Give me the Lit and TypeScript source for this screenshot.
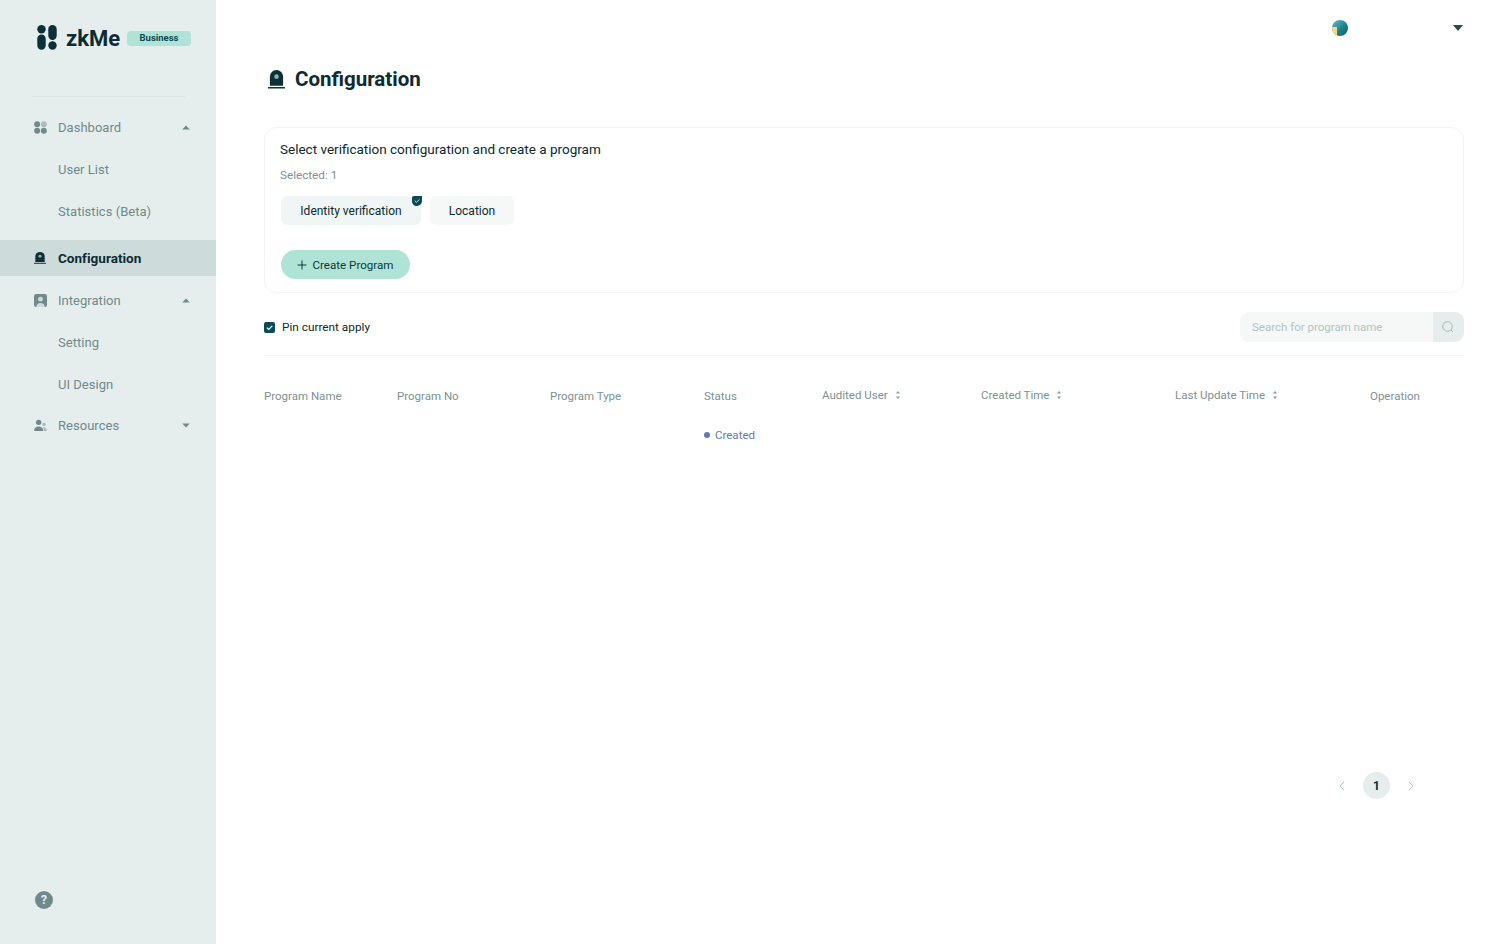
import { LitElement, html, css } from "lit";
import { customElement } from "lit/decorators.js";

const caret = (up: boolean) => html`<svg class="caret" viewBox="0 0 8 5" width="8" height="5"><path d=${up ? "M4 0.4 L7.8 4.6 H0.2 Z" : "M4 4.6 L7.8 0.4 H0.2 Z"} fill="#6f8a8c"/></svg>`;
const bell = (w: number, h: number, c: string, dot: string) => html`<svg viewBox="0 0 18 20" width=${w} height=${h} preserveAspectRatio="none"><path d="M2 16.600V7a7 7 0 0 1 14 0V16.600Z" fill=${c}/><circle cx="9" cy="7" r="2.400" fill=${dot}/><rect x="0" y="17.900" width="18" height="1.600" rx=".4" fill=${c}/></svg>`;
const sorter = html`<svg class="sorter" viewBox="0 0 6 10" width="6" height="10"><path d="M3 1 5.300 3.600H.7Z M3 9 5.300 6.400H.7Z" fill="#8fa3a5"/></svg>`;

@customElement("app-root")
export class AppRoot extends LitElement {
  static styles = css`
    :host { display: block; height: 944px; font-family: Roboto, sans-serif; color: #0d2a30; background: #fff; overflow: hidden; }
    * { box-sizing: border-box; }
    .page { display: flex; height: 944px; }
    .side { width: 216px; flex: none; background: #e6eeed; display: flex; flex-direction: column; }
    .brand { height: 97px; margin: 0 31px 0 32px; border-bottom: 1px solid #d9e4e3; display: flex; align-items: flex-start; padding: 25px 0 0 5px; }
    .brand svg { flex: none; }
    .word { flex: none; width: 55px; font: 700 22px/27px Roboto, sans-serif; margin-left: 9px; color: #0c2b33; }
    .tag { flex: none; margin: 6px 0 0 6px; width: 64px; height: 15px; border-radius: 4px; background: #aee3d5; color: #0b4a55; font: 700 9.500px/14px Roboto, sans-serif; text-align: center; }
    .nav { display: flex; flex-direction: column; padding-top: 9px; }
    .item { height: 42px; display: flex; align-items: center; padding: 0 26px 0 34px; font-size: 13px; letter-spacing: .03px; color: #6f8a8c; }
    .item svg.ic { width: 13px; height: 13px; flex: none; margin-right: 11px; }
    .item .lbl { flex: 1; }
    .sub { padding-left: 58px; }
    .active { height: 36px; margin: 8px 0 0; background: #cddbda; color: #0c2b33; font-size: 13.500px; font-weight: 700; }
    .after { margin-top: 3px; }
    .last { margin-top: -1px; }
    .bellwrap { display: flex; margin-right: 12px; }
    .help { margin: auto 0 35px 35px; width: 18px; height: 18px; border-radius: 50%; background: #6f8a8c; color: #e6eeed; font: 700 12px/18px Roboto, sans-serif; text-align: center; }
    .main { flex: 1; padding: 0 48px; display: flex; flex-direction: column; }
    .top { height: 56px; display: flex; align-items: center; }
    .avatar { margin-left: auto; width: 16px; height: 16px; border-radius: 50%; background: linear-gradient(135deg, #58c3c6, #1f7d8a 60%, #0f5d6a); position: relative; overflow: hidden; }
    .avatar::after { content: ""; position: absolute; left: 0; bottom: 0; width: 5px; height: 9px; background: #f2d98a; }
    .drop { margin-left: 105px; margin-right: 1px; }
    h1 { display: flex; align-items: center; margin: 5px 0 0; height: 36px; font-size: 20.500px; font-weight: 700; color: #0c2b33; gap: 10px; padding-left: 4px; }
    .card { margin-top: 30px; height: 166px; border: 1px solid #f1f4f4; border-radius: 12px; padding: 12px 15px; }
    .card h2 { margin: 0; font-size: 13.500px; line-height: 18px; font-weight: 400; color: #0d2a30; }
    .sel { margin-top: 9px; font-size: 11.700px; line-height: 16px; color: #7c9294; }
    .opts { display: flex; gap: 9px; margin: 13px 0 0 1px; }
    .opt { position: relative; height: 29px; border-radius: 6px; background: #f6f7f7; font-size: 12px; line-height: 30px; text-align: center; width: 84px; color: #0d2a30; }
    .opt.on { background: #f0f5f5; width: 140px; }
    .check { position: absolute; right: -1px; top: 0; }
    .create { margin: 25px 0 0 1px; width: 129px; height: 29px; border-radius: 15px; background: #aee3d5; display: flex; align-items: center; justify-content: center; gap: 5px; font-size: 11.600px; color: #0d3a40; }
    .tools { height: 63px; display: flex; align-items: center; border-bottom: 1px solid #f2f4f4; padding: 6px 0 1px; }
    .pin { display: flex; align-items: center; gap: 7px; font-size: 11.800px; margin-top: 1px; }
    .search { margin-left: auto; width: 224px; height: 30px; display: flex; border-radius: 9px; overflow: hidden; background: #f6f7f7; }
    .ph { flex: 1; font-size: 11.500px; line-height: 30px; padding-left: 12px; color: #b4c3c4; }
    .sbtn { width: 31px; background: #e6eeed; display: flex; align-items: center; justify-content: center; padding-right: 2px; }
    .grid { display: grid; grid-template-columns: 133px 153px 154px 118px 159px 194px 195px 94px; font-size: 11.500px; color: #7c9294; }
    .head { margin-top: 29px; height: 21px; align-items: center; }
    .head > div { display: flex; align-items: center; gap: 7px; }
    .head > .s { margin-top: -2px; }
    .row { margin-top: 19px; height: 20px; align-items: center; }
    .status { grid-column: 4; display: flex; align-items: center; gap: 5px; color: #5f7bb0; }
    .dot { width: 6px; height: 6px; border-radius: 50%; background: #5f7bb0; }
    .pager { margin-top: 327px; display: flex; align-items: center; justify-content: flex-end; padding-right: 50px; gap: 18px; }
    .pg { width: 27px; height: 27px; border-radius: 50%; background: #e6eeed; font-size: 12px; font-weight: 700; line-height: 28px; text-align: center; color: #0c2b33; }
  `;

  render() {
    return html`<div class="page">
      <aside class="side">
        <div class="brand">
          <svg viewBox="0 0 20 25" width="20" height="25">
            <circle cx="4.500" cy="4.200" r="4.200" fill="#0c2f38"/>
            <rect x=".3" y="9.600" width="8.400" height="15.100" rx="4.200" fill="#0c2f38"/>
            <rect x="11.300" y="0" width="8.400" height="15" rx="4.200" fill="#0c2f38"/>
            <circle cx="15.500" cy="20.500" r="4.200" fill="#0c2f38"/>
          </svg>
          <span class="word">zkMe</span><span class="tag">Business</span>
        </div>
        <nav class="nav">
          <div class="item"><svg class="ic" viewBox="0 0 14 14"><circle cx="3.400" cy="3.600" r="3.200" fill="#6f8a8c"/><circle cx="10.600" cy="3.600" r="3.200" fill="#a9bcbc"/><circle cx="3.400" cy="10.400" r="3.200" fill="#6f8a8c"/><circle cx="10.600" cy="10.400" r="3.200" fill="#6f8a8c"/></svg><span class="lbl">Dashboard</span>${caret(true)}</div>
          <div class="item sub">User List</div>
          <div class="item sub">Statistics (Beta)</div>
          <div class="item active"><span class="bellwrap">${bell(12, 12, "#0c2f38", "#8fb0b0")}</span><span class="lbl">Configuration</span></div>
          <div class="item after"><svg class="ic" viewBox="0 0 14 14"><rect width="14" height="14" rx="2.400" fill="#6f8a8c"/><circle cx="7" cy="5.600" r="2.600" fill="#cddbda"/><path d="M2.500 14c0-3 2-4.400 4.500-4.400S11.500 11 11.500 14Z" fill="#cddbda"/></svg><span class="lbl">Integration</span>${caret(true)}</div>
          <div class="item sub">Setting</div>
          <div class="item sub">UI Design</div>
          <div class="item last"><svg class="ic" viewBox="0 0 14 14"><circle cx="5" cy="3.600" r="2.900" fill="#6f8a8c"/><path d="M0 13c0-3.400 2.200-5 5-5s5 1.600 5 5Z" fill="#6f8a8c"/><circle cx="10.800" cy="6" r="1.900" fill="#a9bcbc"/><path d="M10.600 13c0-2-.5-3-1.300-4 2.500-.8 4.700.6 4.700 4Z" fill="#a9bcbc"/></svg><span class="lbl">Resources</span>${caret(false)}</div>
        </nav>
        <div class="help">?</div>
      </aside>
      <main class="main">
        <div class="top">
          <div class="avatar"></div>
          <svg class="drop" viewBox="0 0 10 6" width="10" height="6"><path d="M0 0H10L5 6Z" fill="#2c4a50"/></svg>
        </div>
        <h1>${bell(17, 19, "#0c2f38", "#8fb0b0")}Configuration</h1>
        <section class="card">
          <h2>Select verification configuration and create a program</h2>
          <div class="sel">Selected: 1</div>
          <div class="opts">
            <div class="opt on">Identity verification
              <svg class="check" viewBox="0 0 10 10" width="10" height="10"><path d="M2 0H10V5A5 5 0 0 1 5 10C2 10 0 8 0 5V2A2 2 0 0 1 2 0Z" fill="#0c4a55"/><path d="M2.800 4.800 4.500 6.300 7.300 3.500" stroke="#e6eeed" stroke-width=".9" fill="none"/></svg>
            </div>
            <div class="opt">Location</div>
          </div>
          <div class="create"><svg viewBox="0 0 10 10" width="10" height="10"><path d="M5 .5V9.500M.5 5H9.500" stroke="#0d3a40" stroke-width="1"/></svg>Create Program</div>
        </section>
        <div class="tools">
          <div class="pin"><svg viewBox="0 0 11 11" width="11" height="11"><rect width="11" height="11" rx="2" fill="#0c4a55"/><path d="M2.800 5.600 4.800 7.400 8.200 3.800" stroke="#fff" stroke-width="1.200" fill="none"/></svg>Pin current apply</div>
          <div class="search"><div class="ph">Search for program name</div><div class="sbtn"><svg viewBox="0 0 12 12" width="12" height="12"><circle cx="5.500" cy="5.500" r="4.800" stroke="#a4b6b7" fill="none"/><path d="M9 9 11 11" stroke="#a4b6b7"/></svg></div></div>
        </div>
        <div class="grid head">
          <div>Program Name</div><div>Program No</div><div>Program Type</div><div>Status</div>
          <div class="s">Audited User ${sorter}</div><div class="s">Created Time ${sorter}</div><div class="s">Last Update Time ${sorter}</div><div>Operation</div>
        </div>
        <div class="grid row"><div class="status"><span class="dot"></span>Created</div></div>
        <div class="pager">
          <svg viewBox="0 0 6 10" width="6" height="10"><path d="M5 1 1 5l4 4" stroke="#b4c3c4" fill="none"/></svg>
          <div class="pg">1</div>
          <svg viewBox="0 0 6 10" width="6" height="10"><path d="M1 1l4 4-4 4" stroke="#b4c3c4" fill="none"/></svg>
        </div>
      </main>
    </div>`;
  }
}
